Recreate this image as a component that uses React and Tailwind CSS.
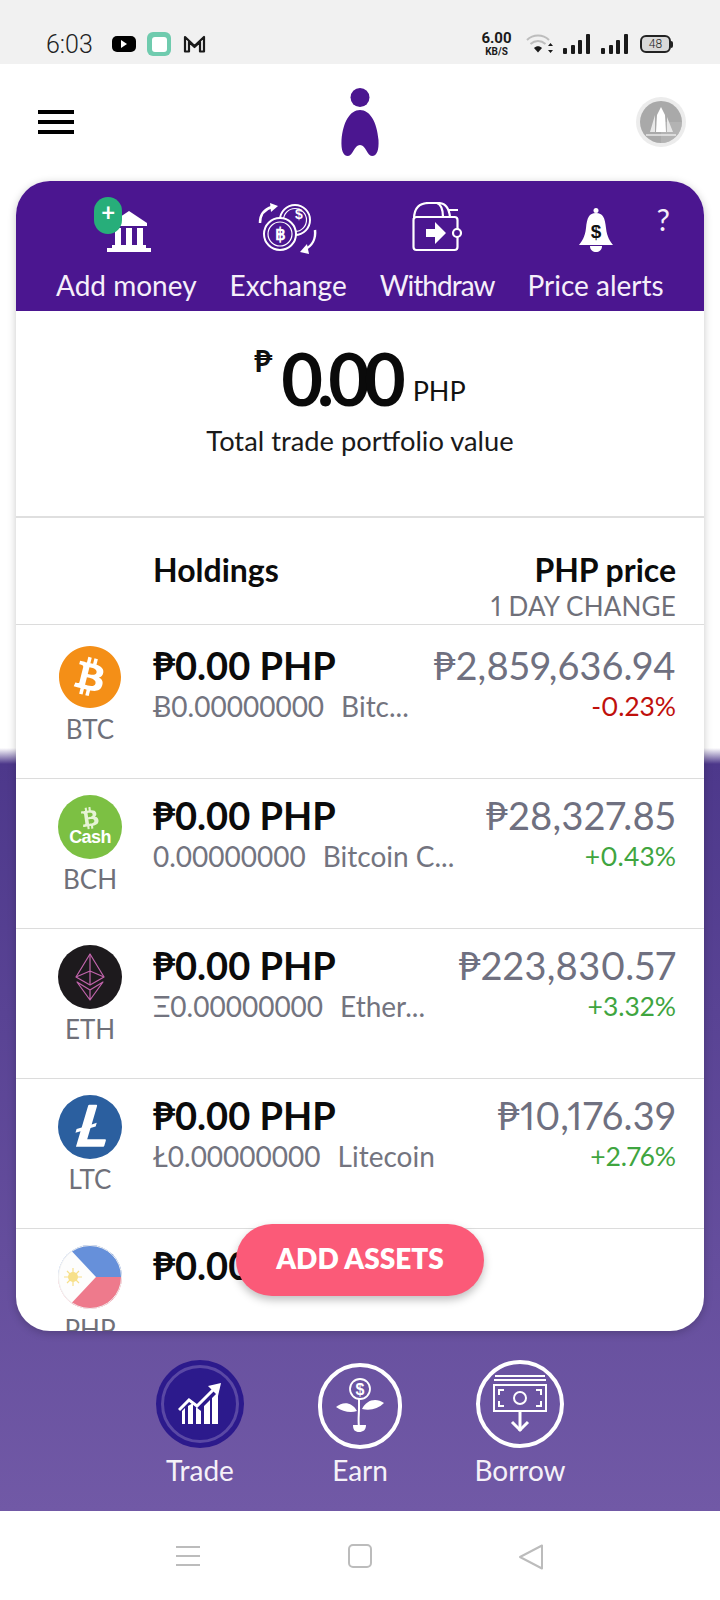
import { FaBitcoin, FaBtc } from "react-icons/fa";
import { SiLitecoin } from "react-icons/si";

const coins = [
  { sym: "BTC", sub: "Ƀ0.00000000", name: "Bitc...", price: "₱2,859,636.94", change: "-0.23%", up: false },
  { sym: "BCH", sub: "0.00000000", name: "Bitcoin C...", price: "₱28,327.85", change: "+0.43%", up: true },
  { sym: "ETH", sub: "Ξ0.00000000", name: "Ether...", price: "₱223,830.57", change: "+3.32%", up: true },
  { sym: "LTC", sub: "Ł0.00000000", name: "Litecoin", price: "₱10,176.39", change: "+2.76%", up: true },
];

function BtcIcon() {
  return (
    <div className="h-[64px] w-[64px] rounded-full bg-white">
      <FaBitcoin className="h-[64px] w-[64px] text-[#f48f17]" />
    </div>
  );
}

function BchIcon() {
  return (
    <div className="flex h-[64px] w-[64px] flex-col items-center justify-center rounded-full bg-[#7cc043] text-white">
      <FaBtc className="h-[22px] w-[22px] rotate-[-8deg] text-[#e6f3d5]" />
      <span className="mt-[-3px] font-['Liberation_Sans'] text-[18px] leading-[22px] font-bold tracking-[-0.6px]">Cash</span>
    </div>
  );
}

function EthIcon() {
  return (
    <div className="flex h-[64px] w-[64px] items-center justify-center rounded-full bg-[#1d1a1d]">
      <svg width="32" height="48" viewBox="0 0 32 48" fill="none" stroke="#c264ac" strokeWidth="1.2" strokeLinejoin="round">
        <path d="M16 1 L30 24 L16 32 L2 24 Z" />
        <path d="M16 1 V32 M2 24 L16 18 L30 24" />
        <path d="M3 29 L16 47 L29 29 L16 37 Z M16 37 V47" />
      </svg>
    </div>
  );
}

function LtcIcon() {
  return (
    <div className="h-[64px] w-[64px] rounded-full bg-white">
      <SiLitecoin className="h-[64px] w-[64px] text-[#2b5f9f]" />
    </div>
  );
}

function PhpIcon() {
  return (
    <svg width="64" height="64" viewBox="0 0 64 64">
      <defs>
        <clipPath id="flag">
          <circle cx="32" cy="32" r="32" />
        </clipPath>
      </defs>
      <g clipPath="url(#flag)">
        <rect width="64" height="32" fill="#6690da" />
        <rect y="32" width="64" height="32" fill="#ee7a8c" />
        <path d="M8 0 L38 32 L8 64 L0 64 V0 Z" fill="#fdfdfd" />
        <circle cx="15" cy="32" r="5" fill="#f7e08a" />
        <path d="M15 23 V41 M6 32 H24 M9 26 L21 38 M21 26 L9 38" stroke="#f7e08a" strokeWidth="1.2" />
      </g>
      <circle cx="32" cy="32" r="31.5" fill="none" stroke="#f0f0f0" />
    </svg>
  );
}

const coinIcons = { BTC: BtcIcon, BCH: BchIcon, ETH: EthIcon, LTC: LtcIcon };

function StatusBar() {
  return (
    <div className="flex h-[64px] items-center bg-[#f1f1f1] pt-[24px] pl-[46px] pr-[47px]">
      <span className="w-[66px] font-['Roboto'] text-[25px] font-light leading-none text-[#222]">6:03</span>
      <div className="flex h-[16px] w-[24px] items-center justify-center rounded-[5px] bg-black">
        <div className="h-0 w-0 border-y-[4px] border-l-[6px] border-y-transparent border-l-white" />
      </div>
      <div className="ml-[11px] flex h-[24px] w-[24px] items-center justify-center rounded-[6px] bg-[#6fcbae]">
        <div className="h-[15px] w-[15px] rounded-[3px] bg-white" />
      </div>
      <svg className="ml-[12px] mt-[-1px]" width="23" height="18" viewBox="0 0 23 18" fill="none" stroke="#1a1a1a" strokeWidth="2.2" strokeLinejoin="round">
        <path d="M2 16.500 V2 L11.500 11 L21 2 V16.500 H17 V7 L11.500 12 L6 7 V16.500 Z" />
      </svg>
      <div className="ml-auto flex w-[31px] flex-col items-center font-['Roboto'] font-bold text-[#1a1a1a]">
        <span className="text-[15px] leading-[15px]">6.00</span>
        <span className="text-[10px] leading-[11px]">KB/S</span>
      </div>
      <svg className="ml-[14px]" width="28" height="20" viewBox="0 0 28 20" fill="none">
        <path d="M1 6 C7 0 17 0 23 6" stroke="#bdbdbd" strokeWidth="2" />
        <path d="M4.500 10 C9 6 15 6 19.500 10" stroke="#bdbdbd" strokeWidth="2" />
        <path d="M8 14 C10.500 11.500 13.500 11.500 16 14 L12 18.500 Z" fill="#1a1a1a" />
        <path d="M24.500 9 L27 12 H22 Z M24.500 19 L27 16 H22 Z" fill="#1a1a1a" />
      </svg>
      <SignalBars className="ml-[9px]" />
      <SignalBars className="ml-[11px]" />
      <div className="ml-[12px] flex items-center">
        <div className="flex h-[18px] w-[31px] items-center justify-center rounded-[6px] border-2 border-[#222] bg-[#d9d9d9] font-['Roboto'] text-[12px] font-light leading-none text-[#222]">
          48
        </div>
        <div className="h-[7px] w-[2px] rounded-r-[2px] bg-[#222]" />
      </div>
    </div>
  );
}

function SignalBars({ className }) {
  return (
    <div className={`flex h-[20px] w-[27px] items-end justify-between ${className}`}>
      <div className="h-[6px] w-[4px] rounded-[1px] bg-[#1a1a1a]" />
      <div className="h-[9px] w-[4px] rounded-[1px] bg-[#1a1a1a]" />
      <div className="h-[14px] w-[4px] rounded-[1px] bg-[#1a1a1a]" />
      <div className="h-[20px] w-[4px] rounded-[1px] bg-[#1a1a1a]" />
    </div>
  );
}

function TopBar() {
  return (
    <div className="flex h-[117px] items-start justify-between pl-[38px] pr-[34px]">
      <div className="w-[46px]">
        <div className="mt-[46px] flex w-[36px] flex-col gap-[6px]">
          <div className="h-[4px] bg-black" />
          <div className="h-[4px] bg-black" />
          <div className="h-[4px] bg-black" />
        </div>
      </div>
      <svg className="mt-[24px]" width="40" height="68" viewBox="0 0 40 68" fill="#4b1690">
        <ellipse cx="20" cy="9.500" rx="9.500" ry="9.500" />
        <path d="M20 22 C30 22 37 34 38.500 52 C39 62 37 68 32 68 C27 68 26 57 20 57 C14 57 13 68 8 68 C3 68 1 62 1.500 52 C3 34 10 22 20 22 Z" />
      </svg>
      <div className="mt-[33px] flex h-[50px] w-[50px] items-center justify-center rounded-full bg-[#ececec]">
        <svg width="42" height="42" viewBox="0 0 42 42">
          <circle cx="21" cy="21" r="21" fill="#a9a9a9" />
          <path d="M21 42 A21 21 0 0 0 42 21 H21 Z" fill="#bdbdbd" opacity="0.5" />
          <path d="M21 6 L25 14 L26 31 H16 L17 14 Z" fill="#fff" />
          <path d="M15 14 L10 31 H15 Z M27 16 V31 L33 31 Z" fill="#e8e8e8" />
          <path d="M6 34 H36" stroke="#e8e8e8" strokeWidth="1.500" />
        </svg>
      </div>
    </div>
  );
}

function BankIcon() {
  return (
    <svg width="46" height="42" viewBox="0 0 46 42" fill="#fff">
      <path d="M23 1 L41 13 V16 H5 V13 Z" />
      <rect x="9" y="18" width="6" height="17" />
      <rect x="20" y="18" width="6" height="17" />
      <rect x="31" y="18" width="6" height="17" />
      <rect x="6" y="35" width="34" height="3" />
      <rect x="1" y="38" width="44" height="4" />
    </svg>
  );
}

function ExchangeIcon() {
  return (
    <svg className="mb-[-3px]" width="60" height="52" viewBox="0 0 60 52" fill="none" stroke="#fff" strokeWidth="2">
      <circle cx="37" cy="17" r="15" />
      <circle cx="37" cy="17" r="11.500" strokeWidth="1.200" />
      <circle cx="22" cy="31" r="16" fill="#4b1690" />
      <circle cx="22" cy="31" r="12" strokeWidth="1.200" />
      <text x="22" y="37" textAnchor="middle" fill="#fff" stroke="none" fontSize="17" fontWeight="700" fontFamily="Liberation Sans">฿</text>
      <text x="41" y="16" textAnchor="middle" fill="#fff" stroke="none" fontSize="14" fontWeight="700" fontFamily="Liberation Sans">$</text>
      <path d="M2 20 C2 11 7 6 14 4" strokeWidth="2.500" />
      <path d="M12 0 L20 3 L13 9 Z" fill="#fff" stroke="none" />
      <path d="M57 27 C58 36 54 43 47 46" strokeWidth="2.500" />
      <path d="M49 41 L42 49 L51 51 Z" fill="#fff" stroke="none" />
    </svg>
  );
}

function WalletIcon() {
  return (
    <svg width="50" height="50" viewBox="0 0 50 50" fill="none" stroke="#fff" strokeWidth="2.200">
      <path d="M2 17 C2 5 8 1 17 1 H26 C33 1 37 6 38 15" />
      <path d="M25 1 C30 3 31 9 31 15" />
      <path d="M36 8 H46" />
      <rect x="1.500" y="15" width="44" height="33" rx="3" />
      <path d="M14 27 H23 V20 L34 31 L23 42 V35 H14 Z" fill="#fff" stroke="none" />
      <circle cx="45" cy="31" r="4" fill="#4b1690" />
    </svg>
  );
}

function BellIcon() {
  return (
    <svg width="36" height="44" viewBox="0 0 36 44">
      <circle cx="18" cy="2.500" r="2.500" fill="#fff" />
      <path d="M18 5 C25 5 27 10 28 20 C29 29 32 33 35 37 H1 C4 33 7 29 8 20 C9 10 11 5 18 5 Z" fill="#fff" />
      <path d="M12 38 H24 C24 42 21 44 18 44 C15 44 12 42 12 38 Z" fill="#fff" />
      <text x="18" y="30" textAnchor="middle" fill="#111" fontSize="19" fontWeight="700" fontFamily="Liberation Sans">$</text>
    </svg>
  );
}

function Action({ label, tight, children }) {
  return (
    <div className="flex flex-col items-center">
      <div className="flex h-[56px] items-end justify-center">{children}</div>
      <span className={`mt-[17px] whitespace-nowrap text-[28px] leading-[32px] text-[#f6effa] ${tight ? "tracking-[-1px]" : ""}`}>{label}</span>
    </div>
  );
}

function CoinRow({ coin, first }) {
  const Icon = coinIcons[coin.sym];
  return (
    <div className={`flex shrink-0 border-t border-[#dcdcdc] pr-[28px] ${first ? "h-[154px] pt-[20px]" : "h-[150px] pt-[16px]"}`}>
      <div className="flex w-[137px] shrink-0 pl-[11px]">
        <div className="flex w-[126px] flex-col items-center">
          <Icon />
          <span className="mt-[5px] text-[26px] leading-[30px] text-[#6f7079]">{coin.sym}</span>
        </div>
      </div>
      <div className="mt-[-2px] min-w-0 flex-1">
        <div className="text-[38px] leading-[44px] font-bold text-[#0b0b0b]">₱0.00 PHP</div>
        <div className="whitespace-nowrap text-[28px] leading-[38px] text-[#73747f]">
          {coin.sub}
          <span className="ml-[17px]">{coin.name}</span>
        </div>
      </div>
      <div className="mt-[-2px] text-right proportional-nums">
        <div className="whitespace-nowrap text-[38px] leading-[44px] tracking-[0.3px] text-[#6f7080]">{coin.price}</div>
        <div className={`text-[26.500px] leading-[38px] ${coin.up ? "text-[#3fa53f]" : "text-[#c0100c]"}`}>{coin.change}</div>
      </div>
    </div>
  );
}

function Card() {
  return (
    <div className="relative mx-[16px] flex h-[1150px] flex-col overflow-hidden rounded-[34px] bg-white shadow-[0_2px_8px_rgba(0,0,0,0.22)]">
      <div className="relative flex h-[130px] shrink-0 gap-[33px] bg-[#4b1690] pl-[40px] pt-[15px]">
        <Action label="Add money">
          <div className="relative ml-[6px]">
            <BankIcon />
            <div className="absolute top-[-13px] left-[-12px] flex h-[37px] w-[28px] items-center justify-center rounded-full bg-[#27ae7a] pb-[8px] text-[24px] leading-none font-bold text-white">+</div>
          </div>
        </Action>
        <Action label="Exchange">
          <ExchangeIcon />
        </Action>
        <Action label="Withdraw" tight>
          <WalletIcon />
        </Action>
        <Action label="Price alerts">
          <BellIcon />
        </Action>
        <span className="absolute top-[22px] right-[34px] text-[30px] leading-[32px] text-[#f6effa]">?</span>
      </div>

      <div className="flex h-[207px] shrink-0 flex-col items-center border-b-2 border-[#dfdfdf] pt-[31px]">
        <div className="flex items-end">
          <span className="mb-[38px] mr-[9px] text-[31px] leading-[32px] font-bold text-[#111]">₱</span>
          <span className="text-[72px] leading-[72px] font-bold tracking-[-6px] text-[#0a0a0a]">0.00</span>
          <span className="mb-[7px] ml-[13px] text-[27px] leading-[32px] text-[#111]">PHP</span>
        </div>
        <div className="mt-[10px] text-[27.300px] leading-[34px] text-[#1a1a1a]">Total trade portfolio value</div>
      </div>

      <div className="flex h-[106px] shrink-0 justify-between pr-[28px] pl-[137px]">
        <div className="mt-[33px] text-[32px] leading-[38px] font-bold text-[#0b0b0b]">Holdings</div>
        <div className="mt-[33px] text-right">
          <div className="text-[32px] leading-[38px] font-bold text-[#0b0b0b]">PHP price</div>
          <div className="text-[26px] leading-[34px] tracking-[0.2px] text-[#6f7079] proportional-nums">1 DAY CHANGE</div>
        </div>
      </div>

      {coins.map((coin, i) => (
        <CoinRow key={coin.sym} coin={coin} first={i === 0} />
      ))}

      <div className="flex h-[150px] shrink-0 border-t border-[#dcdcdc] pt-[16px]">
        <div className="flex w-[137px] shrink-0 pl-[11px]">
          <div className="flex w-[126px] flex-col items-center">
            <PhpIcon />
            <span className="mt-[5px] text-[26px] leading-[30px] text-[#6f7079]">PHP</span>
          </div>
        </div>
        <div className="mt-[-2px] text-[38px] leading-[44px] font-bold text-[#0b0b0b]">₱0.00 PHP</div>
      </div>

      <button className="absolute bottom-[35px] left-[220px] flex h-[72px] w-[248px] items-center justify-center rounded-full bg-[#fb5a78] pb-[4px] text-[28px] font-extrabold text-white shadow-[0_4px_8px_rgba(0,0,0,0.25)]">
        ADD ASSETS
      </button>
    </div>
  );
}

function TradeIcon() {
  return (
    <svg width="44" height="44" viewBox="0 0 44 44" fill="#fff">
      <path d="M4 42 V29 L7 26 V42 Z M10 42 V24 L15 21 V42 Z M18 42 V25 L23 29 V42 Z M26 42 V24 L32 18 V42 Z M34 42 V16 L40 10 V42 Z" />
      <path d="M1 28 L11 18 L19 24 L36 7" fill="none" stroke="#fff" strokeWidth="3" />
      <path d="M30 4 L43 1 L40 14 Z" />
    </svg>
  );
}

function EarnIcon() {
  return (
    <svg width="50" height="56" viewBox="0 0 50 56" fill="none" stroke="#fff" strokeWidth="1.800">
      <circle cx="25" cy="11" r="10" />
      <text x="25" y="17" textAnchor="middle" fill="#fff" stroke="none" fontSize="16" fontWeight="700" fontFamily="Liberation Sans">$</text>
      <path d="M24 21 V30 C24 36 23 42 24 49" strokeWidth="2" />
      <path d="M22 33 C17 24 8 23 1 29 C8 34 16 35 22 33 Z" fill="#fff" stroke="none" />
      <path d="M27 31 C31 22 41 19 49 25 C43 31 35 33 27 31 Z" fill="#fff" stroke="none" />
      <path d="M18 47 H31 C31 52 28 54 24 54 C20 54 18 52 18 47 Z" fill="#fff" stroke="none" />
    </svg>
  );
}

function BorrowIcon() {
  return (
    <svg width="54" height="58" viewBox="0 0 54 58" fill="none" stroke="#fff" strokeWidth="2">
      <path d="M2 1 H52 M1 5 H53" />
      <rect x="1" y="10" width="52" height="26" />
      <circle cx="27" cy="23" r="6" />
      <path d="M6 20 V15 H11 M43 15 H48 V20 M6 26 V31 H11 M43 31 H48 V26" />
      <path d="M27 36 V56" strokeWidth="3" />
      <path d="M19 47 L27 55 L35 47" strokeWidth="3" />
    </svg>
  );
}

function Tab({ label, children }) {
  return (
    <div className="flex w-[88px] flex-col items-center">
      <div className="flex h-[90px] items-end">{children}</div>
      <span className="mt-[4px] whitespace-nowrap text-[28px] leading-[34px] text-[#f5f1f8]">{label}</span>
    </div>
  );
}

function BottomTabs() {
  return (
    <div className="flex h-[180px] justify-center gap-[72px] pt-[28px]">
      <Tab label="Trade">
        <div className="mb-[1px] flex h-[88px] w-[88px] items-center justify-center rounded-full bg-[#2c1a8c]">
          <div className="flex h-[78px] w-[78px] items-center justify-center rounded-full border-[3px] border-[#5a48a4]">
            <TradeIcon />
          </div>
        </div>
      </Tab>
      <Tab label="Earn">
        <div className="flex h-[86px] w-[84px] items-center justify-center rounded-full border-[4px] border-white">
          <EarnIcon />
        </div>
      </Tab>
      <Tab label="Borrow">
        <div className="mb-[1px] flex h-[88px] w-[88px] items-center justify-center rounded-full border-[4px] border-white">
          <BorrowIcon />
        </div>
      </Tab>
    </div>
  );
}

function NavBar() {
  return (
    <div className="flex h-[88px] items-start bg-white pt-[33px] pl-[176px]">
      <div className="flex h-[24px] w-[24px] flex-col justify-between py-[2px]">
        <div className="h-[2px] bg-[#bcbcbc]" />
        <div className="h-[2px] bg-[#bcbcbc]" />
        <div className="h-[2px] bg-[#bcbcbc]" />
      </div>
      <div className="ml-[148px] h-[24px] w-[24px] rounded-[5px] border-2 border-[#bcbcbc]" />
      <svg className="ml-[146px]" width="26" height="26" viewBox="0 0 26 26" fill="none" stroke="#bcbcbc" strokeWidth="2" strokeLinejoin="round">
        <path d="M24 1.500 V24.500 L2 13 Z" />
      </svg>
    </div>
  );
}

export default function App() {
  return (
    <div className="flex h-[1600px] w-[720px] flex-col overflow-hidden bg-white font-['Lato','DejaVu_Sans',sans-serif]">
      <StatusBar />
      <div className="bg-[linear-gradient(to_bottom,#fff_0,#fff_684px,#4d388b_700px,#7159a6_100%)]">
        <TopBar />
        <Card />
        <BottomTabs />
      </div>
      <NavBar />
    </div>
  );
}
